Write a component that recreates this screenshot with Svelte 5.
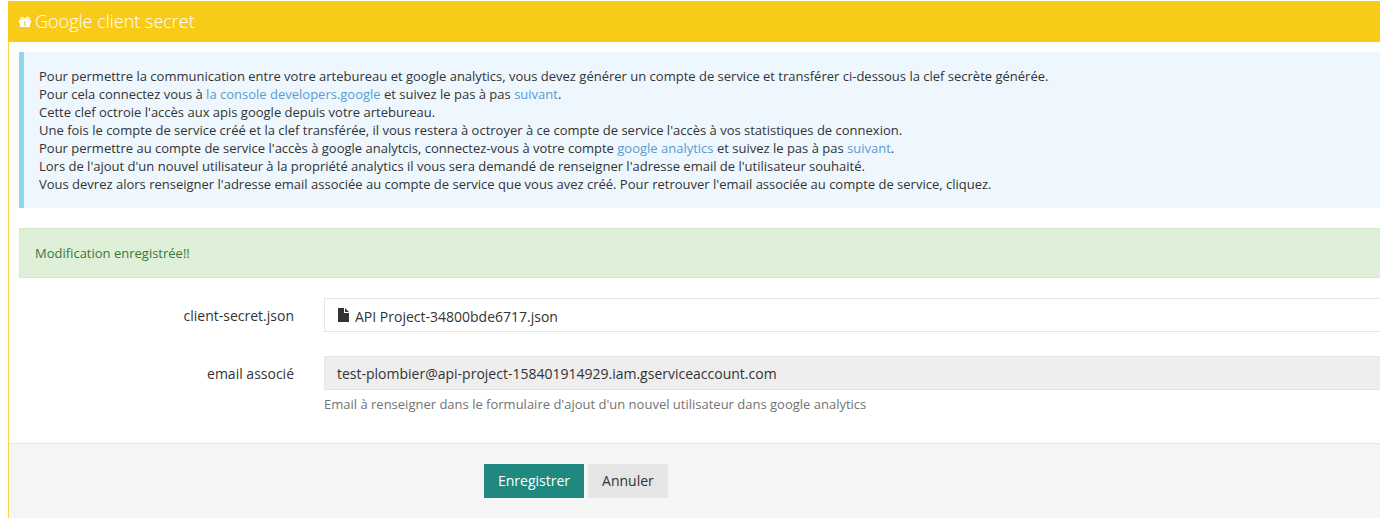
<script lang="ts">
	let fileName = $state('API Project-34800bde6717.json');
	let email = $state('test-plombier@api-project-158401914929.iam.gserviceaccount.com');
</script>

<main class="portlet">
	<header>
		<svg class="gift" viewBox="0 0 12 12" aria-hidden="true">
			<path
				fill-rule="evenodd"
				d="M.5 4H2C1.5 3.6 1.300 3 1.300 2.500 1.300 1.500 2.200.8 3.200.8 4.300.8 5 1.500 6 2.700 7 1.500 7.700.8 8.800.8c1 0 1.900.7 1.900 1.700 0 .5-.2 1.100-.7 1.500h1.500q.5 0 .5.500V7h-1v3.500q0 .5-.5.500h-9Q1 11 1 10.500V7H0V4.500Q0 4 .5 4zM3.200 2c-.8 0-.8 1 0 1h1.300C4 2.300 3.700 2 3.200 2zM8.800 2c-.5 0-.8.3-1.300 1h1.300c.8 0 .8-1 0-1z"
			/>
			<path class="ribbon" d="M5 5h2v5H5z" />
		</svg>
		<h1>Google client secret</h1>
	</header>

	<div class="body">
		<div class="note">
			Pour permettre la communication entre votre artebureau et google analytics, vous devez générer un compte de service et transférer ci-dessous la clef secrète générée.<br />
			Pour cela connectez vous à <a href="#console">la console developers.google</a> et suivez le pas à pas <a href="#guide">suivant</a>.<br />
			Cette clef octroie l'accès aux apis google depuis votre artebureau.<br />
			Une fois le compte de service créé et la clef transférée, il vous restera à octroyer à ce compte de service l'accès à vos statistiques de connexion.<br />
			Pour permettre au compte de service l'accès à google analytcis, connectez-vous à votre compte <a href="#analytics">google analytics</a> et suivez le pas à pas <a href="#guide-analytics">suivant</a>.<br />
			Lors de l'ajout d'un nouvel utilisateur à la propriété analytics il vous sera demandé de renseigner l'adresse email de l'utilisateur souhaité.<br />
			Vous devrez alors renseigner l'adresse email associée au compte de service que vous avez créé. Pour retrouver l'email associée au compte de service, cliquez.
		</div>

		<div class="alert" role="status">Modification enregistrée!!</div>
	</div>

	<form onsubmit={(e) => e.preventDefault()}>
		<div class="row">
			<label for="secret">client-secret.json</label>
			<div class="control file">
				<svg viewBox="0 0 12 14" aria-hidden="true">
					<path d="M0 0h6v5h5v9H0zM7 0l4 4H7z" />
				</svg>
				<input id="secret" type="text" readonly bind:value={fileName} />
			</div>
		</div>

		<div class="row">
			<label for="email">email associé</label>
			<div class="field">
				<input id="email" class="control" type="text" readonly bind:value={email} aria-describedby="email-help" />
				<p id="email-help">Email à renseigner dans le formulaire d'ajout d'un nouvel utilisateur dans google analytics</p>
			</div>
		</div>

		<footer>
			<button type="submit" class="primary">Enregistrer</button>
			<button type="button">Annuler</button>
		</footer>
	</form>
</main>

<style>
	:global(body) {
		margin: 0;
		background: #fff;
	}

	.portlet {
		margin: 1px 0 0 8px;
		border-left: 1px solid #fad83f;
		font: 13px/18px 'Open Sans', sans-serif;
		color: #333;
	}

	header {
		display: flex;
		align-items: center;
		gap: 4px;
		height: 41px;
		margin-left: -1px;
		padding-left: 11px;
		background: #f8cb19;
		color: #fff;
	}

	.gift {
		width: 12px;
		height: 12px;
		fill: #fff;
	}

	.ribbon {
		fill: #f8cb19;
		opacity: 0.6;
	}

	h1 {
		margin: 0;
		padding-bottom: 2px;
		font-size: 18px;
		line-height: 18px;
		font-weight: 300;
	}

	.body {
		padding: 10px 0 0 10px;
	}

	.note {
		padding: 15px;
		border-left: 5px solid #91d9e8;
		background: #eef7fe;
		color: #333;
	}

	a {
		color: #5b9bd1;
		text-decoration: none;
	}

	.alert {
		margin-top: 20px;
		padding: 15px;
		border: 1px solid #d6e9c6;
		border-right: 0;
		background: #dff0d8;
		color: #3c763d;
	}

	.row {
		display: grid;
		grid-template-columns: 285px 1fr;
		column-gap: 30px;
		margin-top: 20px;
	}

	label {
		padding-top: 9px;
		font-size: 14px;
		text-align: right;
	}

	.control {
		box-sizing: border-box;
		width: 100%;
		height: 34px;
		padding: 6px 12px;
		border: 1px solid #e5e5e5;
		border-right: 0;
	}

	.row + .row {
		margin-top: 24px;
	}

	.file {
		display: flex;
		align-items: center;
		gap: 5px;
		padding-left: 13px;
	}

	.file svg {
		width: 12px;
		height: 14px;
		fill: #333;
	}

	input {
		flex: 1;
		padding: 0;
		border: 0;
		border-radius: 0;
		outline: 0;
		background: #fff;
		font: 14px/20px 'Open Sans', sans-serif;
		color: #333;
	}

	.file input {
		padding-top: 3px;
	}

	input.control {
		background: #eee;
	}

	p {
		margin: 5px 0 0;
		color: #737373;
	}

	footer {
		display: flex;
		gap: 4px;
		margin-top: 30px;
		padding: 20px 0 20px 475px;
		border-top: 1px solid #e5e5e5;
		background: #f5f5f5;
	}

	button {
		padding: 7px 14px;
		border: 0;
		background: #e5e5e5;
		font: 14px/20px 'Open Sans', sans-serif;
		color: #333;
		cursor: pointer;
	}

	.primary {
		background: #1f897f;
		color: #fff;
	}
</style>
